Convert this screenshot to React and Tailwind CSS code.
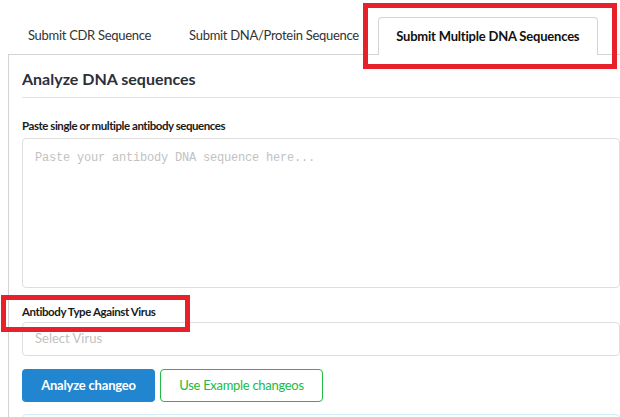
export default function App() {
  const tabs = [
    { label: 'Submit CDR Sequence', active: false },
    { label: 'Submit DNA/Protein Sequence', active: false },
    { label: 'Submit Multiple DNA Sequences', active: true },
  ]

  return (
    <div className="relative w-[620px] h-[417px] overflow-hidden bg-white font-['Lato','Liberation_Sans',sans-serif] text-[#222]">
      <div className="w-[680px] pl-2 pt-[17px]">
        {/* Tab menu */}
        <div className="relative z-10 flex items-end pl-px">
          {tabs.map((t) =>
            t.active ? (
              <div
                key={t.label}
                className="-mb-px flex h-[38px] w-[220px] items-center justify-center rounded-t-[4px] border border-b-0 border-[#d4d4d5] bg-white text-[13px] font-bold tracking-[-0.2px] text-[#111]"
              >
                {t.label}
              </div>
            ) : (
              <div
                key={t.label}
                className="flex h-[37px] items-center px-[19px] text-[13px] tracking-[-0.3px] text-[#333]"
              >
                {t.label}
              </div>
            )
          )}
        </div>

        {/* Attached segment */}
        <div className="border-l border-t border-[#d4d4d5] pl-[13px] pt-[13px] pr-[60px]">
          <h2 className="border-b border-[#e3e3e3] pb-[7px] text-[16px] font-bold leading-[22px] text-[#2b303a]">
            Analyze DNA sequences
          </h2>

          <label className="mt-[20px] block text-[11.5px] font-bold leading-[16px] tracking-[-0.45px] text-[#1a1a1a]">
            Paste single or multiple antibody sequences
          </label>
          <textarea
            className="mt-[4px] block h-[150px] w-full resize-none rounded-[4px] border border-[#dedede] px-3 py-[11px] font-['Liberation_Mono',monospace] text-[12px] leading-[16px] tracking-[-0.2px] outline-none placeholder:text-[#c2c2c2]"
            placeholder="Paste your antibody DNA sequence here..."
          />

          <label className="mt-[16px] block text-[11.5px] font-bold leading-[16px] tracking-[-0.4px] text-[#1a1a1a]">
            Antibody Type Against Virus
          </label>
          <div className="mt-[2px] flex h-[34px] items-center rounded-[4px] border border-[#dedede] px-3 text-[13px] text-[#c2c2c2]">
            Select Virus
          </div>

          <div className="mt-[13px] flex gap-[5px]">
            <button className="flex h-[33px] w-[133px] items-center justify-center rounded-[4px] bg-[#2185d0] text-[13px] font-bold tracking-[-0.2px] text-white">
              Analyze changeo
            </button>
            <button className="flex h-[33px] w-[163px] items-center justify-center rounded-[4px] border border-[#21ba45] bg-white text-[13px] tracking-[-0.3px] text-[#21ba45]">
              Use Example changeos
            </button>
          </div>

          <div className="mt-[12px] h-[30px] rounded-[4px] border border-[#d4ecf5] bg-[#f8ffff]" />
        </div>
      </div>

      {/* Red highlight boxes */}
      <div className="absolute left-[363px] top-[3px] h-[66px] w-[254px] border-[5px] border-[#e8202a]" />
      <div className="absolute left-[1px] top-[295px] h-[37px] w-[189px] border-[5px] border-[#e8202a]" />
    </div>
  )
}
